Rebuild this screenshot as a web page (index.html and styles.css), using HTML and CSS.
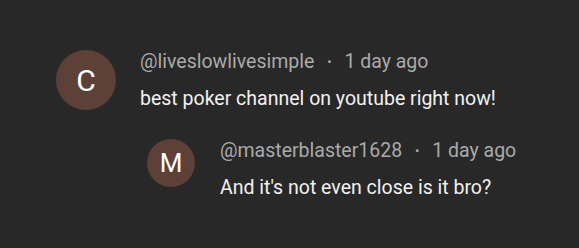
FILE: index.html
```html
<!DOCTYPE html>
<html lang="en">

<head>
    <meta charset="UTF-8">
    <meta name="viewport" content="width=device-width, initial-scale=1.0">
    <title>Comments</title>
    <link rel="stylesheet" href="styles.css">
</head>

<body>
    <div class="thread">
        <div class="comment">
            <div class="avatar">C</div>
            <div class="comment-main">
                <div class="comment-head">
                    <span class="author">@liveslowlivesimple</span>
                    <span class="dot">&bull;</span>
                    <span class="time">1 day ago</span>
                </div>
                <div class="comment-text">best poker channel on youtube right now!</div>
            </div>
        </div>

        <!-- Reply -->
        <div class="comment reply">
            <div class="avatar small">M</div>
            <div class="comment-main">
                <div class="comment-head">
                    <span class="author">@masterblaster1628</span>
                    <span class="dot">&bull;</span>
                    <span class="time">1 day ago</span>
                </div>
                <div class="comment-text">And it's not even close is it bro?</div>
            </div>
        </div>
    </div>
</body>

</html>
```

FILE: styles.css
```css
* {
    box-sizing: border-box;
}

body {
    margin: 0;
    background: #282828;
    font-family: Roboto, "Liberation Sans", sans-serif;
    width: 579px;
    height: 248px;
    overflow: hidden;
}

.thread {
    padding: 50px 0 0 56px;
}

.comment {
    display: flex;
    align-items: flex-start;
    gap: 24px;
}

.avatar {
    width: 60px;
    height: 60px;
    border-radius: 50%;
    background: #5d4037;
    color: #fff;
    font-size: 30px;
    display: flex;
    align-items: center;
    justify-content: center;
    flex-shrink: 0;
}

.avatar.small {
    width: 48px;
    height: 48px;
    font-size: 26px;
}

.comment-head {
    font-size: 19.5px;
    line-height: 24px;
    color: #aaaaaa;
}

.dot {
    font-size: 13px;
    margin: 0 8px;
    vertical-align: 2px;
}

.comment-text {
    margin-top: 13px;
    font-size: 19.5px;
    line-height: 24px;
    color: #f1f1f1;
}

.reply {
    margin: 28px 0 0 91px;
    gap: 25px;
}
```
